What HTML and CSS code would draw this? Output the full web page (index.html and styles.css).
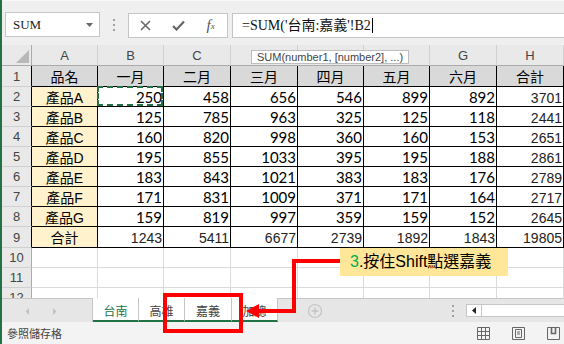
FILE: index.html
```html
<!DOCTYPE html>
<html lang="zh-Hant">
<head>
    <meta charset="UTF-8">
    <title>Excel - 台南</title>
    <link rel="stylesheet" href="styles.css">
</head>
<body>
    <div class="excel">
        <!-- Formula bar -->
        <div class="formula-bar">
            <div class="name-box">
                <span>SUM</span>
                <svg width="7" height="4" viewBox="0 0 7 4"><polygon points="0,0 7,0 3.5,4" fill="#666"/></svg>
            </div>
            <div class="grip">
                <svg width="2" height="12" viewBox="0 0 2 12"><rect y="0" width="2" height="2" fill="#a0a0a0"/><rect y="5" width="2" height="2" fill="#a0a0a0"/><rect y="10" width="2" height="2" fill="#a0a0a0"/></svg>
            </div>
            <div class="fx-buttons">
                <span class="fx-btn">
                    <svg width="11" height="11" viewBox="0 0 11 11"><path d="M1 1 L10 10 M10 1 L1 10" stroke="#666" stroke-width="1.5"/></svg>
                </span>
                <span class="fx-btn">
                    <svg width="13" height="11" viewBox="0 0 13 11"><path d="M1 6 L4.5 9.5 L12 1.5" stroke="#666" stroke-width="2.2" fill="none"/></svg>
                </span>
                <span class="fx-btn fx-label">f<sub>x</sub></span>
            </div>
            <div class="formula"><span class="caret">=SUM('台南:嘉義'!B2</span></div>
        </div>

        <!-- Worksheet grid -->
        <div class="sheet">
            <div class="corner"></div>
            <div class="ch">A</div><div class="ch">B</div><div class="ch">C</div><div class="ch">D</div>
            <div class="ch">E</div><div class="ch">F</div><div class="ch">G</div><div class="ch">H</div>

            <div class="rh edge">1</div>
            <div class="t hd">品名</div><div class="t hd">一月</div><div class="t hd">二月</div><div class="t hd">三月</div>
            <div class="t hd">四月</div><div class="t hd">五月</div><div class="t hd">六月</div><div class="t hd">合計</div>

            <div class="rh edge">2</div>
            <div class="t nm">產品A</div><div class="t num sel">250</div><div class="t num">458</div><div class="t num">656</div>
            <div class="t num">546</div><div class="t num">899</div><div class="t num">892</div><div class="t num tot">3701</div>

            <div class="rh edge">3</div>
            <div class="t nm">產品B</div><div class="t num">125</div><div class="t num">785</div><div class="t num">963</div>
            <div class="t num">325</div><div class="t num">125</div><div class="t num">118</div><div class="t num tot">2441</div>

            <div class="rh edge">4</div>
            <div class="t nm">產品C</div><div class="t num">160</div><div class="t num">820</div><div class="t num">998</div>
            <div class="t num">360</div><div class="t num">160</div><div class="t num">153</div><div class="t num tot">2651</div>

            <div class="rh edge">5</div>
            <div class="t nm">產品D</div><div class="t num">195</div><div class="t num">855</div><div class="t num">1033</div>
            <div class="t num">395</div><div class="t num">195</div><div class="t num">188</div><div class="t num tot">2861</div>

            <div class="rh edge">6</div>
            <div class="t nm">產品E</div><div class="t num">183</div><div class="t num">843</div><div class="t num">1021</div>
            <div class="t num">383</div><div class="t num">183</div><div class="t num">176</div><div class="t num tot">2789</div>

            <div class="rh edge">7</div>
            <div class="t nm">產品F</div><div class="t num">171</div><div class="t num">831</div><div class="t num">1009</div>
            <div class="t num">371</div><div class="t num">171</div><div class="t num">164</div><div class="t num tot">2717</div>

            <div class="rh edge">8</div>
            <div class="t nm">產品G</div><div class="t num">159</div><div class="t num">819</div><div class="t num">997</div>
            <div class="t num">359</div><div class="t num">159</div><div class="t num">152</div><div class="t num tot">2645</div>

            <div class="rh edge">9</div>
            <div class="t nm">合計</div><div class="t num tot">1243</div><div class="t num tot">5411</div><div class="t num tot">6677</div>
            <div class="t num tot">2739</div><div class="t num tot">1892</div><div class="t num tot">1843</div><div class="t num tot">19805</div>

            <div class="rh">10</div>
            <div></div><div></div><div></div><div></div><div></div><div></div><div></div><div></div>
            <div class="rh">11</div>
            <div></div><div></div><div></div><div></div><div></div><div></div><div></div><div></div>
            <div class="rh">12</div>
            <div></div><div></div><div></div><div></div><div></div><div></div><div></div><div></div>
        </div>

        <!-- Sheet tabs -->
        <div class="tabs-bar">
            <div class="sheet-nav">
                <svg width="90" height="23" viewBox="0 0 90 23"><polygon points="27,9 27,16 23.5,12.5" fill="#c2c2c2"/><polygon points="51,9 51,16 54.5,12.5" fill="#c2c2c2"/></svg>
            </div>
            <div class="sheet-tab active">台南</div>
            <div class="sheet-tab">高雄</div>
            <div class="sheet-tab wide">嘉義</div>
            <div class="sheet-tab">加總</div>
            <div class="tab-rest">
                <svg class="add-sheet" width="16" height="16" viewBox="0 0 16 16"><circle cx="8" cy="8" r="6.5" stroke="#c4c4c4" stroke-width="1.2" fill="none"/><path d="M8 4.5 V11.5 M4.5 8 H11.5" stroke="#c4c4c4" stroke-width="1.4"/></svg>
                <svg class="split" width="2" height="12" viewBox="0 0 2 12"><rect y="0" width="2" height="2" fill="#a0a0a0"/><rect y="5" width="2" height="2" fill="#a0a0a0"/><rect y="10" width="2" height="2" fill="#a0a0a0"/></svg>
                <div class="hscroll">
                    <div class="hscroll-btn"><svg width="4" height="7" viewBox="0 0 4 7"><polygon points="4,0 4,7 0,3.5" fill="#222"/></svg></div>
                </div>
            </div>
        </div>

        <!-- Status bar -->
        <div class="status-bar">
            <span>參照儲存格</span>
            <div class="views">
                <svg width="13" height="13" viewBox="0 0 13 13"><path d="M0.5 0.5 H12.5 V12.5 H0.5 Z M4.5 0.5 V12.5 M8.5 0.5 V12.5 M0.5 4.5 H12.5 M0.5 8.5 H12.5" stroke="#666" fill="none"/></svg>
                <svg width="13" height="13" viewBox="0 0 13 13"><path d="M0.5 0.5 H12.5 V12.5 H0.5 Z" stroke="#666" fill="none"/><path d="M3.5 2.5 H9.5 V10.5 H3.5 Z M5 5 H8 M5 7 H8" stroke="#666" fill="none"/></svg>
                <svg width="13" height="13" viewBox="0 0 13 13"><path d="M0.5 0.5 H12.5 V12.5 H0.5 Z" stroke="#666" fill="none"/><path d="M4.5 0.5 V6.5 H8.5 V0.5" stroke="#666" stroke-width="1.6" fill="none"/></svg>
            </div>
        </div>
    </div>

    <!-- Function tooltip -->
    <div class="tip">SUM(number1, [number2], ...)</div>

    <!-- Annotation -->
    <svg class="marks" width="564" height="344" viewBox="0 0 564 344">
        <rect x="165" y="295" width="76" height="36" stroke="#ff0000" stroke-width="4" fill="none"/>
        <polyline points="340,261 294,261 294,311 257,311" stroke="#ff0000" stroke-width="4" fill="none"/>
        <polygon points="246,311 259,304 259,318" fill="#ff0000"/>
    </svg>
    <div class="callout"><span class="step">3</span>.按住Shift點選嘉義</div>
</body>
</html>
```

FILE: styles.css
```css
body {
    margin: 0;
    width: 564px;
    height: 344px;
    overflow: hidden;
    position: relative;
    background: #fff;
    font-family: "Liberation Sans", "Noto Sans CJK TC", sans-serif;
    color: #000;
}

.excel {
    height: 344px;
    border-left: 2px solid #217346;
    display: flex;
    flex-direction: column;
}

/* formula bar */
.formula-bar {
    height: 45px;
    box-sizing: border-box;
    padding: 11px 0 0 3px;
    background: #efefef;
    border-top: 1px solid #f8f8f8;
    display: flex;
    align-items: flex-start;
}

.name-box {
    width: 95px;
    height: 25px;
    box-sizing: border-box;
    border: 1px solid #c6c6c6;
    background: #fff;
    padding: 0 6px 0 7px;
    display: flex;
    align-items: center;
    justify-content: space-between;
    font: 13px "Liberation Serif", serif;
    color: #222;
}

.grip {
    width: 28px;
    height: 25px;
    display: flex;
    align-items: center;
    justify-content: center;
}

.fx-buttons {
    width: 100px;
    height: 25px;
    box-sizing: border-box;
    margin-top: 1px;
    border: 1px solid #c6c6c6;
    background: #fff;
    display: flex;
    align-items: center;
}

.fx-btn {
    width: 33px;
    display: flex;
    justify-content: center;
    align-items: center;
}

.fx-label {
    font: italic 15px "Liberation Serif", serif;
    color: #555;
}

.fx-label sub {
    font-size: 9px;
    vertical-align: -1px;
}

.formula {
    flex: 1;
    height: 25px;
    box-sizing: border-box;
    margin: 1px 0 0 4px;
    border: 1px solid #c6c6c6;
    border-right: none;
    background: #fff;
    padding-left: 9px;
    font: 14px "Liberation Serif", "Noto Sans CJK TC", serif;
    line-height: 23px;
    color: #111;
    white-space: nowrap;
}

.caret {
    border-right: 1px solid #000;
    padding-right: 1px;
}

/* worksheet */
.sheet {
    height: 253px;
    display: grid;
    grid-template-columns: 30px 66px 66px 67px 67px 66px 66px 67px 67px;
    grid-template-rows: 21px 21px repeat(7, 20px) 21px 20px 20px 20px;
    overflow: hidden;
}

.sheet > div {
    box-sizing: border-box;
    border-right: 1px solid #dadada;
    border-bottom: 1px solid #dadada;
    white-space: nowrap;
}

.corner,
.ch,
.rh {
    background: #e9e9e9;
    color: #444;
    font-size: 13px;
}

.corner {
    position: relative;
    border-right-color: #ababab !important;
    border-bottom-color: #ababab !important;
}

.corner::after {
    content: "";
    position: absolute;
    right: 2px;
    bottom: 2px;
    width: 13px;
    height: 13px;
    background: #b8b8b8;
    clip-path: polygon(100% 0, 100% 100%, 0 100%);
}

.ch {
    text-align: center;
    line-height: 21px;
    border-right-color: #d0d0d0 !important;
    border-bottom-color: #ababab !important;
}

.rh {
    display: flex;
    align-items: center;
    justify-content: center;
    border-right-color: #ababab !important;
    border-bottom-color: #d0d0d0 !important;
}

.rh.edge {
    border-right-color: #000 !important;
}

.t {
    border-right-color: #000 !important;
    border-bottom-color: #000 !important;
    padding: 3px 1px 0;
    line-height: 17px;
    font-size: 15px;
}

.hd {
    background: #d9d9d9;
    text-align: center;
    font-size: 14px;
}

.nm {
    background: #fff2cc;
    text-align: center;
    font-size: 14px;
}

.num {
    text-align: right;
    font-family: Lato, "Liberation Sans", sans-serif;
    padding-top: 2px;
}

.tot {
    font-family: "Liberation Sans", sans-serif;
    font-size: 14px;
    padding-top: 3px;
    color: #222;
}

.sel {
    position: relative;
}

.sel::after {
    content: "";
    position: absolute;
    top: -1px;
    left: -1px;
    right: 0;
    bottom: 0;
    border: 2px dashed #217346;
}

/* sheet tabs */
.tabs-bar {
    height: 24px;
    display: flex;
    background: #e6e6e6;
}

.sheet-nav {
    width: 91px;
    box-sizing: border-box;
    border-top: 1px solid #c6c6c6;
    border-right: 1px solid #c6c6c6;
}

.sheet-tab {
    width: 46px;
    box-sizing: border-box;
    padding-top: 2px;
    background: #fff;
    border-right: 1px solid #c6c6c6;
    border-bottom: 2px solid #217346;
    display: flex;
    align-items: center;
    justify-content: center;
    font: 12px "Noto Sans CJK TC", sans-serif;
    color: #444;
}

.sheet-tab.wide {
    width: 47px;
}

.sheet-tab.active {
    color: #217346;
}

.tab-rest {
    flex: 1;
    border-top: 1px solid #c6c6c6;
    display: flex;
    align-items: center;
}

.add-sheet {
    margin-left: 29px;
}

.split {
    margin-left: auto;
    margin-right: 12px;
}

.hscroll {
    width: 98px;
    height: 13px;
    box-sizing: border-box;
    border: 1px solid #c6c6c6;
    border-right: none;
    background: #fff;
    display: flex;
}

.hscroll-btn {
    width: 14px;
    border-right: 1px solid #c6c6c6;
    display: flex;
    align-items: center;
    justify-content: center;
}

/* status bar */
.status-bar {
    flex: 1;
    background: #f3f3f3;
    display: flex;
    align-items: center;
    padding: 0 4px 0 5px;
    font: 11px "Noto Sans CJK TC", sans-serif;
    color: #444;
}

.views {
    margin-left: auto;
    display: flex;
    gap: 22px;
}

/* overlays */
.tip {
    position: absolute;
    left: 251px;
    top: 50px;
    height: 14px;
    box-sizing: border-box;
    padding: 0 5px;
    background: #fff;
    border: 1px solid #bdbdbd;
    font: 11px "Liberation Sans", sans-serif;
    line-height: 12px;
    color: #444;
}

.marks {
    position: absolute;
    left: 0;
    top: 0;
    pointer-events: none;
}

.callout {
    position: absolute;
    left: 340px;
    top: 248px;
    width: 168px;
    height: 28px;
    box-sizing: border-box;
    padding-left: 10px;
    background: #ffe699;
    font-size: 16px;
    line-height: 28px;
    color: #000;
    white-space: nowrap;
}

.step {
    color: #00b050;
}
```
